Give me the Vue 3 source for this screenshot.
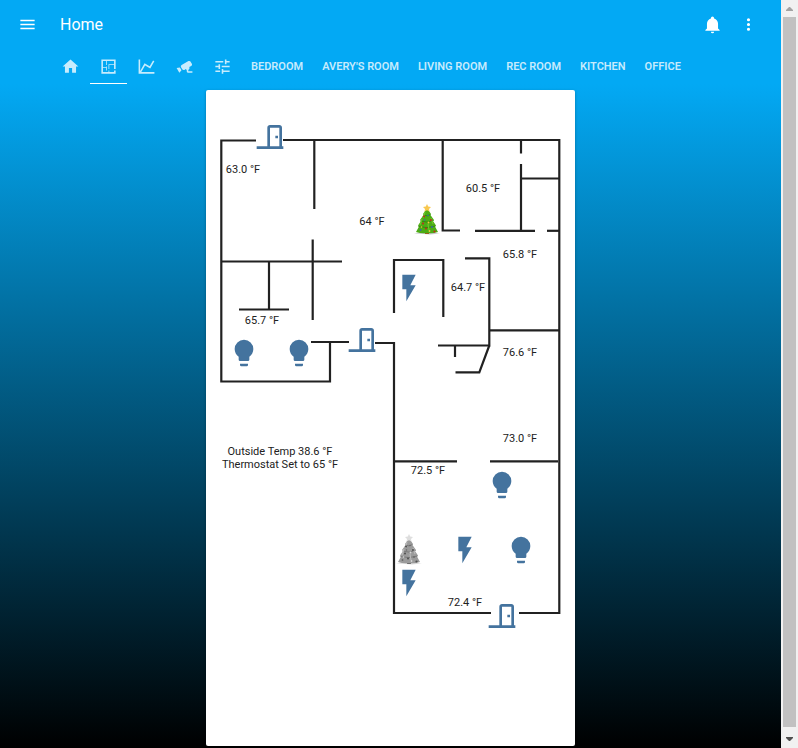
<script setup>
import { ref } from 'vue'

const icons = {
  menu: 'M3,6H21V8H3V6M3,11H21V13H3V11M3,16H21V18H3V16Z',
  bell: 'M21,19V20H3V19L5,17V11C5,7.9 7.03,5.17 10,4.29C10,4.19 10,4.1 10,4A2,2 0 0,1 12,2A2,2 0 0,1 14,4C14,4.1 14,4.19 14,4.29C16.97,5.17 19,7.9 19,11V17L21,19M14,21A2,2 0 0,1 12,23A2,2 0 0,1 10,21',
  dots: 'M12,16A2,2 0 0,1 14,18A2,2 0 0,1 12,20A2,2 0 0,1 10,18A2,2 0 0,1 12,16M12,10A2,2 0 0,1 14,12A2,2 0 0,1 12,14A2,2 0 0,1 10,12A2,2 0 0,1 12,10M12,4A2,2 0 0,1 14,6A2,2 0 0,1 12,8A2,2 0 0,1 10,6A2,2 0 0,1 12,4Z',
  home: 'M10,20V14H14V20H19V12H22L12,3L2,12H5V20H10Z',
  plan: 'M10 5V10H9V5H5V13H9V12H10V17H9V14H5V19H12V17H13V19H19V17H21V21H3V3H21V15H19V10H13V15H12V9H19V5H10Z',
  chart: 'M16,11.78L20.24,4.45L21.97,5.45L16.74,14.5L10.23,10.75L5.46,19H22V21H2V3H4V17.54L9.5,8L16,11.78Z',
  cctv: 'M18.15,4.94C17.77,4.91 17.37,5 17,5.2L8.35,10.2C7.39,10.76 7.07,12 7.62,12.94L9.12,15.53C9.67,16.5 10.89,16.82 11.85,16.27L13.65,15.23C13.92,15.69 14.32,16.06 14.81,16.27V18.04C14.81,19.13 15.7,20 16.81,20H22V18.04H16.81V16.27C17.72,15.87 18.31,14.97 18.31,14C18.31,13.54 18.19,13.11 17.97,12.73L20.5,11.27C21.47,10.71 21.8,9.5 21.24,8.53L19.74,5.94C19.4,5.34 18.79,5 18.15,4.94M6.22,13.17L2,13.87L2.75,15.17L4.75,18.63L5.5,19.93L8.22,16.63L6.22,13.17Z',
  tune: 'M3,17V19H9V17H3M3,5V7H13V5H3M13,21V19H21V17H13V15H11V21H13M7,9V11H3V13H7V15H9V9H7M21,13V11H11V13H21M15,9H17V7H21V5H17V3H15V9Z',
  bulb: 'M12,2A7,7 0 0,0 5,9C5,11.38 6.19,13.47 8,14.74V17A1,1 0 0,0 9,18H15A1,1 0 0,0 16,17V14.74C17.81,13.47 19,11.38 19,9A7,7 0 0,0 12,2M9,21A1,1 0 0,0 10,22H14A1,1 0 0,0 15,21V20H9V21Z',
  flash: 'M7,2V13H10V22L17,10H13L17,2H7Z',
  door: 'M16,11H18V13H16V11M12,3H19C20.11,3 21,3.89 21,5V19H22V21H2V19H10V5C10,3.89 10.89,3 12,3M12,5V19H19V5H12Z',
}

const tabs = [
  { id: 'home', icon: 'home', label: 'Overview' },
  { id: 'plan', icon: 'plan', label: 'Floor plan' },
  { id: 'chart', icon: 'chart', label: 'History' },
  { id: 'cctv', icon: 'cctv', label: 'Cameras' },
  { id: 'tune', icon: 'tune', label: 'Settings' },
  { id: 'bedroom', label: 'Bedroom' },
  { id: 'avery', label: "Avery's Room" },
  { id: 'living', label: 'Living Room' },
  { id: 'rec', label: 'Rec Room' },
  { id: 'kitchen', label: 'Kitchen' },
  { id: 'office', label: 'Office' },
]
const active = ref('plan')

// Plan units: the card is 369 wide and 656 high.
const W = 369
const H = 656
const walls = [
  'M50 50.5H15.3V291.5H124V252', 'M105 252H143', 'M77 50H353.3V523H313',
  'M108.3 50V119', 'M106.7 149.5V230', 'M15 171.5H136', 'M63 171V219.5', 'M33 219.5H83',
  'M236.7 50V140.5H254', 'M315 50V63.5', 'M315 74V141', 'M315 88.5H353', 'M269 140.8H329', 'M341 140.8H353',
  'M188 223V170H237.3V227', 'M259 168.4H283.3V255.5H232', 'M283 240.3H353', 'M249 255V267',
  'M283.3 255.5L273.3 282.4H249.5', 'M169 253H188V523H285', 'M188 371.4H251', 'M284 371.4H352',
]
const readings = [
  { x: 37, y: 79, lines: ['63.0 °F'] },
  { x: 166, y: 131, lines: ['64 °F'] },
  { x: 277, y: 98, lines: ['60.5 °F'] },
  { x: 314, y: 164, lines: ['65.8 °F'] },
  { x: 262, y: 197, lines: ['64.7 °F'] },
  { x: 56, y: 230, lines: ['65.7 °F'] },
  { x: 314, y: 262, lines: ['76.6 °F'] },
  { x: 314, y: 348, lines: ['73.0 °F'] },
  { x: 222, y: 380, lines: ['72.5 °F'] },
  { x: 259, y: 512, lines: ['72.4 °F'] },
  { x: 74, y: 368, lines: ['Outside Temp 38.6 °F', 'Thermostat Set to 65 °F'] },
]
const devices = [
  { x: 64, y: 47, icon: 'door', label: 'Back door' },
  { x: 156, y: 250, icon: 'door', label: 'Side door' },
  { x: 296, y: 526, icon: 'door', label: 'Front door' },
  { x: 38, y: 263, icon: 'bulb', label: 'Left lamp' },
  { x: 93, y: 263, icon: 'bulb', label: 'Right lamp' },
  { x: 296, y: 395, icon: 'bulb', label: 'Ceiling light' },
  { x: 315, y: 460, icon: 'bulb', label: 'Corner lamp' },
  { x: 203, y: 198, icon: 'flash', label: 'Closet switch' },
  { x: 259, y: 460, icon: 'flash', label: 'Center switch' },
  { x: 203, y: 493, icon: 'flash', label: 'Wall switch' },
  { x: 221, y: 130, tree: true, on: true, label: 'Tree lights' },
  { x: 203, y: 460, tree: true, on: false, label: 'Small tree lights' },
]
const place = (p) => ({ left: (p.x / W) * 100 + '%', top: (p.y / H) * 100 + '%' })
</script>

<template>
  <div class="window">
    <div class="app">
      <header>
        <div class="toolbar">
          <button class="tool" aria-label="Menu"><svg class="icon" viewBox="0 0 24 24"><path :d="icons.menu" /></svg></button>
          <h1>Home</h1>
          <button class="tool" aria-label="Notifications"><svg class="icon" viewBox="0 0 24 24"><path :d="icons.bell" /></svg></button>
          <button class="tool" aria-label="More options"><svg class="icon" viewBox="0 0 24 24"><path :d="icons.dots" /></svg></button>
        </div>
        <nav>
          <a
            v-for="t in tabs"
            :key="t.id"
            :href="'#' + t.id"
            :class="{ active: active === t.id }"
            :aria-label="t.label"
            @click.prevent="active = t.id"
          >
            <svg v-if="t.icon" class="icon" viewBox="0 0 24 24"><path :d="icons[t.icon]" /></svg>
            <template v-else>{{ t.label }}</template>
          </a>
        </nav>
      </header>

      <main>
        <section class="card">
          <svg class="walls" :viewBox="`0 0 ${W} ${H}`" aria-hidden="true">
            <path v-for="d in walls" :key="d" :d="d" />
          </svg>
          <p v-for="r in readings" :key="r.lines[0]" class="reading" :style="place(r)">
            <span v-for="l in r.lines" :key="l">{{ l }}</span>
          </p>
          <button v-for="d in devices" :key="d.label" class="device" :aria-label="d.label" :style="place(d)">
            <svg v-if="d.tree" class="symbol" :class="{ off: !d.on }" viewBox="0 0 32 32">
              <path d="M3 29.500Q8 28 16 28.500T29 29.300Q22 30.800 16 30.300T3 29.500Z" fill="#c3c6ca" />
              <path d="M14 27H18V30H14Z" fill="#a5561e" />
              <path d="M16 4L20 10L19.3 10.8L23 16L22 17L25 21.500L24 22.500L27 28Q21.500 29.700 16 29Q10.500 29.700 5 28L8 22.500L7 21.500L10 17L9 16L12.700 10.800L12 10Z" fill="#4cac14" />
              <path d="M12.500 11Q16 13 19.500 10.500M9.800 17Q16 19.500 22.500 16.500M7.500 22.500Q16 25 24.500 22" fill="none" stroke="#348a0e" />
              <path d="M14 8L12 14M11 15L9 21M17 20L18 26M20 14L22 20" fill="none" stroke="#6cc62a" stroke-width="1.200" />
              <g fill="#c3281e"><circle cx="13" cy="12.500" r="1" /><circle cx="20" cy="16" r="1" /><circle cx="12" cy="19.500" r="1" /><circle cx="23.500" cy="27.500" r="1.100" /><circle cx="15" cy="24.500" r="1" /></g>
              <g fill="#3b62b8"><circle cx="17" cy="11.500" r=".8" /><circle cx="13.500" cy="16" r=".8" /><circle cx="21" cy="23" r=".9" /><circle cx="9.500" cy="26" r=".9" /></g>
              <g fill="#f4c63a"><circle cx="17.500" cy="18.500" r=".9" /><circle cx="10.500" cy="23" r=".8" /><circle cx="18.500" cy="27" r=".9" /></g>
              <path d="M16 0L17.200 2.600L20 3L18 4.900L18.500 7.500L16 6.200L13.500 7.500L14 4.900L12 3L14.800 2.600Z" fill="#f8c850" />
            </svg>
            <svg v-else class="symbol" viewBox="0 0 24 24"><path :d="icons[d.icon]" /></svg>
          </button>
        </section>
      </main>
    </div>

    <div class="scrollbar" aria-hidden="true">
      <svg class="arrow up" viewBox="0 0 17 17"><path d="M5 11V10L8 7H9L12 10V11Z" /></svg>
      <div class="thumb"></div>
      <svg class="arrow down" viewBox="0 0 17 17"><path d="M5 6V7L8 10H9L12 7V6Z" /></svg>
    </div>
  </div>
</template>

<style>
body {
  margin: 0;
  background: #000;
}
</style>

<style scoped>
.window {
  display: flex;
  min-height: 100vh;
  font-family: Roboto, "Liberation Sans", sans-serif;
}
.app {
  flex: 1;
  min-width: 0;
  display: flex;
  flex-direction: column;
}
header {
  background: #03a9f4;
  color: #fff;
}
.toolbar {
  box-sizing: border-box;
  display: flex;
  align-items: center;
  gap: 1px;
  height: 48px;
  padding: 0 15px 0 10px;
}
h1 {
  flex: 1;
  margin: 0 0 0 14px;
  font-size: 16px;
  font-weight: 400;
}
button {
  border: 0;
  padding: 0;
  background: none;
  cursor: pointer;
}
.tool {
  display: grid;
  place-items: center;
  width: 35px;
  height: 35px;
  color: #fff;
}
.icon {
  display: block;
  width: 19px;
  height: 19px;
  fill: currentColor;
}
nav {
  display: flex;
  gap: 1px;
  height: 36px;
  padding-left: 52px;
  overflow: hidden;
}
nav a {
  box-sizing: border-box;
  display: flex;
  align-items: center;
  padding: 1px 9px 0;
  border-bottom: 1px solid transparent;
  color: rgba(255, 255, 255, 0.78);
  font-size: 11px;
  font-weight: 600;
  text-transform: uppercase;
  text-decoration: none;
  white-space: nowrap;
}
nav a.active {
  border-bottom-color: #fff;
}
main {
  flex: 1;
  display: flex;
  justify-content: center;
  align-items: flex-start;
  padding: 6px 0 2px;
  background: linear-gradient(#03a9f4, #000);
}
.card {
  position: relative;
  width: 100%;
  max-width: 369px;
  aspect-ratio: 9 / 16;
  border-radius: 2px;
  background: #fff;
  box-shadow: 0 1px 3px rgba(0, 0, 0, 0.3);
}
.walls {
  display: block;
  width: 100%;
  height: 100%;
  fill: none;
  stroke: #212121;
  stroke-width: 2.2;
}
.reading,
.device {
  position: absolute;
  transform: translate(-50%, -50%);
}
.reading {
  display: flex;
  flex-direction: column;
  align-items: center;
  margin: 0;
  color: #212121;
  font-size: 11px;
  line-height: 13px;
  white-space: nowrap;
}
.symbol {
  display: block;
  width: 32px;
  height: 32px;
  fill: #44739e;
}
.off {
  filter: grayscale(1) brightness(1.1);
}
.scrollbar {
  display: flex;
  flex-direction: column;
  width: 17px;
  background: #f1f1f1;
}
.arrow {
  flex: none;
  width: 17px;
  height: 17px;
}
.up {
  fill: #a3a3a3;
}
.down {
  fill: #505050;
}
.thumb {
  flex: 1;
  margin: 0 2px 4px;
  background: #c1c1c1;
}
</style>
